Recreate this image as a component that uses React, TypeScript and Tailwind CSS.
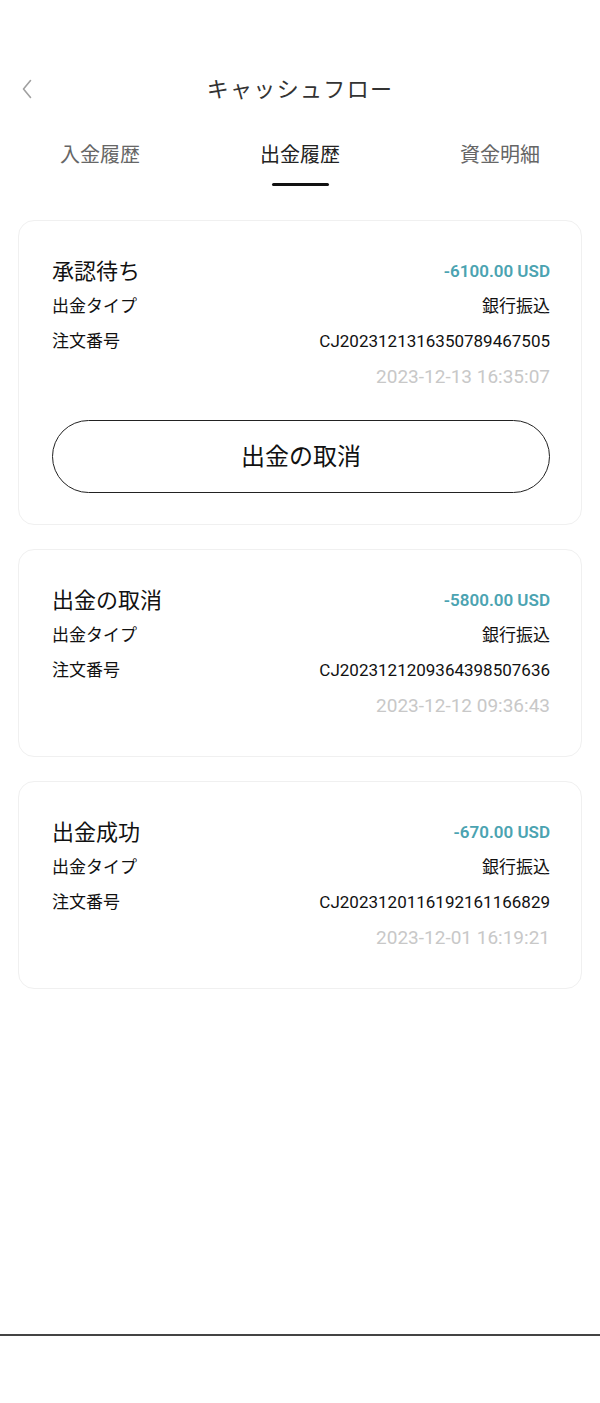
const records = [
  {
    status: "承認待ち",
    amount: "-6100.00 USD",
    type: "銀行振込",
    orderNo: "CJ2023121316350789467505",
    time: "2023-12-13 16:35:07",
    cancellable: true,
  },
  {
    status: "出金の取消",
    amount: "-5800.00 USD",
    type: "銀行振込",
    orderNo: "CJ2023121209364398507636",
    time: "2023-12-12 09:36:43",
    cancellable: false,
  },
  {
    status: "出金成功",
    amount: "-670.00 USD",
    type: "銀行振込",
    orderNo: "CJ2023120116192161166829",
    time: "2023-12-01 16:19:21",
    cancellable: false,
  },
];

const tabs = ["入金履歴", "出金履歴", "資金明細"];

export default function App() {
  return (
    <main
      className="min-h-[1403px] bg-white flex flex-col"
      style={{ fontFamily: "Roboto, 'Noto Sans CJK JP', sans-serif" }}
    >
      {/* Header */}
      <header className="relative h-[60px] mt-[59px] flex items-center justify-center">
        <button className="absolute left-[14px] top-[14px] w-[28px] h-[32px] flex items-center justify-center">
          <svg viewBox="0 0 24 24" className="w-[24px] h-[24px]" fill="none" stroke="#a0a0a0" strokeWidth={1.6}>
            <path d="M14.5 3.5L7.5 12l7 8.5" strokeLinecap="round" strokeLinejoin="round" />
          </svg>
        </button>
        <h1 className="text-[22px] text-[#333] tracking-[0.06em]">キャッシュフロー</h1>
      </header>

      {/* Tabs */}
      <nav className="grid grid-cols-3 h-[80px]">
        {tabs.map((tab, i) => (
          <div key={tab} className="flex flex-col items-center pt-[22px]">
            <span className={`text-[20px] leading-[28px] ${i === 1 ? "text-[#222]" : "text-[#666]"}`}>
              {tab}
            </span>
            {i === 1 && <span className="mt-[14px] w-[57px] h-[3px] bg-[#111] rounded-full" />}
          </div>
        ))}
      </nav>

      {/* Records */}
      <section className="px-[18px] pt-[21px] flex flex-col gap-[24px]">
        {records.map((r) => (
          <div
            key={r.orderNo}
            className="rounded-[16px] border border-[#f0f0f0] pl-[33px] pr-[31px] pt-[33px] pb-[31px]"
          >
            <div className="h-[35px] flex items-center justify-between">
              <span className="text-[22px] text-[#111]">{r.status}</span>
              <span className="text-[17px] font-semibold text-[#4ba3b1]">{r.amount}</span>
            </div>
            <div className="h-[35px] flex items-center justify-between text-[17px] text-[#111]">
              <span>出金タイプ</span>
              <span>{r.type}</span>
            </div>
            <div className="h-[35px] flex items-center justify-between text-[17px] text-[#111]">
              <span>注文番号</span>
              <span>{r.orderNo}</span>
            </div>
            <div className="h-[37px] flex items-center justify-end text-[19px] text-[#c8c8c8]">
              {r.time}
            </div>
            {r.cancellable && (
              <button className="mt-[24px] w-full h-[73px] rounded-full border border-[#222] text-[24px] text-[#111]">
                出金の取消
              </button>
            )}
          </div>
        ))}
      </section>

      <div className="flex-1" />
      <div className="h-[2px] bg-[#444] mb-[67px]" />
    </main>
  );
}
